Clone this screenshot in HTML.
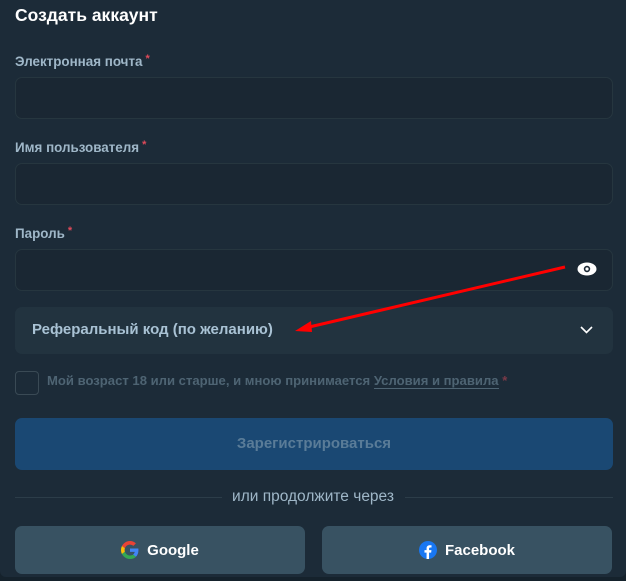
<!DOCTYPE html>
<html><head><meta charset="utf-8"><style>
*{box-sizing:border-box;margin:0;padding:0}
body{width:626px;height:581px;background:#15222c;font-family:"Liberation Sans",sans-serif;position:relative;overflow:hidden}
.card{position:absolute;left:0;top:0;width:626px;height:577px;background:#1c2b38;border-radius:0 0 6px 6px}
.t{position:absolute;left:15px;top:5px;color:#fff;font-weight:bold;font-size:17.5px}
.l{position:absolute;left:15px;color:#9fb7c8;font-weight:bold;font-size:13.4px}
.l i{color:#e04a5a;font-style:normal;font-size:11px;vertical-align:4px;margin-left:3px}
.in{position:absolute;left:15px;width:598px;height:42px;background:#1a2733;border:1px solid #26363f;border-radius:7px}
.ref{position:absolute;left:15px;top:307px;width:598px;height:47px;background:#22333f;border-radius:7px;color:#a9c2d4;font-weight:bold;font-size:15px;padding:14px 0 0 17px}
.cb{position:absolute;left:15px;top:371px;width:24px;height:24px;border:1px solid #3a4a55;border-radius:4px}
.ct{position:absolute;left:47px;top:373px;font-size:13.1px;font-weight:bold;color:#4e6473}
.ct u{text-decoration:none;border-bottom:1px solid #4e6473}
.btn{position:absolute;left:15px;top:418px;width:598px;height:52px;background:#1a4873;border-radius:7px;color:#5a7c98;font-weight:bold;font-size:15px;text-align:center;line-height:52px}
.hr{position:absolute;top:497px;height:1px;background:#2c3d49}
.or{position:absolute;left:0;width:626px;top:488px;text-align:center;color:#9fb7c8;font-size:15.5px}
.s{position:absolute;top:526px;width:290px;height:48px;background:#385262;border-radius:7px;color:#fff;font-weight:bold;font-size:15px;display:flex;align-items:center;justify-content:center;gap:8px}
</style></head><body>
<div class="card">
<div class="t">Создать аккаунт</div>
<div class="l" style="top:53px">Электронная почта<i>*</i></div>
<div class="in" style="top:77px"></div>
<div class="l" style="top:139px">Имя пользователя<i>*</i></div>
<div class="in" style="top:163px"></div>
<div class="l" style="top:225px">Пароль<i>*</i></div>
<div class="in" style="top:249px"></div>
<svg style="position:absolute;left:577px;top:262px" width="20" height="14" viewBox="0 0 20 14"><ellipse cx="10" cy="7" rx="9.5" ry="6.5" fill="#fff"/><circle cx="10" cy="7" r="3.2" fill="#1a2733"/><circle cx="10" cy="7" r="1.6" fill="#fff"/></svg>
<div class="ref">Реферальный код (по желанию)</div>
<svg style="position:absolute;left:580px;top:326px" width="13" height="8" viewBox="0 0 13 8"><path d="M1 1l5.5 5.5L12 1" stroke="#fff" stroke-width="1.6" fill="none"/></svg>
<svg style="position:absolute;left:0;top:0" width="626" height="400"><line x1="565" y1="267" x2="305" y2="328" stroke="#f00" stroke-width="3"/><path d="M295 331l16-10 1 11z" fill="#f00"/></svg>
<div class="cb"></div>
<div class="ct">Мой возраст 18 или старше, и мною принимается <u>Условия и правила</u> <span style="color:#7a3a48">*</span></div>
<div class="btn">Зарегистрироваться</div>
<div class="hr" style="left:15px;width:207px"></div>
<div class="hr" style="left:405px;width:208px"></div>
<div class="or">или продолжите через</div>
<div class="s" style="left:15px"><svg width="18" height="18" viewBox="0 0 48 48"><path fill="#EA4335" d="M24 9.5c3.5 0 6.6 1.2 9 3.5l6.7-6.7C35.6 2.4 30.2 0 24 0 14.6 0 6.6 5.4 2.6 13.3l7.8 6C12.3 13.6 17.6 9.5 24 9.5z"/><path fill="#4285F4" d="M46.5 24.5c0-1.6-.1-3.1-.4-4.5H24v9h12.7c-.6 3-2.2 5.5-4.7 7.2l7.6 5.9c4.4-4.1 6.9-10.100 6.9-17.6z"/><path fill="#FBBC05" d="M10.4 28.7c-.5-1.4-.8-3-.8-4.7s.3-3.2.8-4.7l-7.8-6C.9 16.6 0 20.2 0 24s.9 7.4 2.6 10.7l7.8-6z"/><path fill="#34A853" d="M24 48c6.5 0 11.9-2.1 15.9-5.8l-7.6-5.9c-2.1 1.4-4.9 2.3-8.3 2.3-6.4 0-11.7-4.1-13.6-9.8l-7.8 6C6.6 42.6 14.6 48 24 48z"/></svg>Google</div>
<div class="s" style="left:322px"><svg width="18" height="18" viewBox="0 0 24 24"><circle cx="12" cy="12" r="12" fill="#1877F2"/><path d="M13.4 24v-8.5h2.8l.4-3.3h-3.2v-2c0-.9.3-1.6 1.6-1.6h1.7V5.7c-.3 0-1.3-.1-2.5-.1-2.5 0-4.1 1.5-4.1 4.2v2.4H7.3v3.3h2.8V24z" fill="#fff"/></svg>Facebook</div>
</div>
</body></html>
